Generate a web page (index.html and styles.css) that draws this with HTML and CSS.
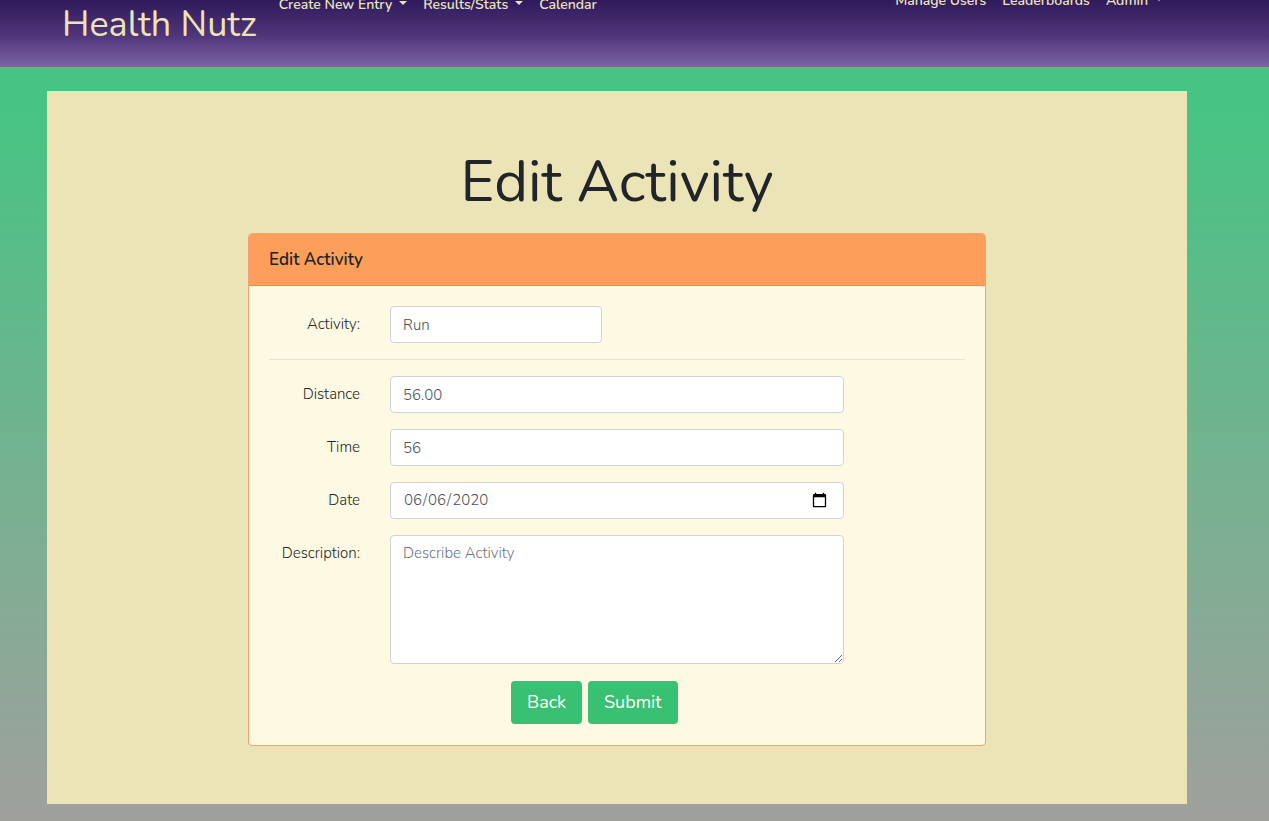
FILE: index.html
```html
<!DOCTYPE html>
<html lang="en">
<head>
<meta charset="utf-8">
<title>Health Nutz - Edit Activity</title>
<link rel="stylesheet" href="styles.css">
</head>
<body>
<header class="navbar">
  <nav class="navbar-inner">
    <a class="brand" href="#">Health Nutz</a>
    <div class="nav-links">
      <a class="nav-link dropdown" href="#">Create New Entry</a>
      <a class="nav-link dropdown" href="#">Results/Stats</a>
      <a class="nav-link" href="#">Calendar</a>
    </div>
    <div class="nav-links account-links">
      <a class="nav-link" href="#">Manage Users</a>
      <a class="nav-link" href="#">Leaderboards</a>
      <a class="nav-link dropdown" href="#">Admin</a>
    </div>
  </nav>
</header>
<main class="page">
  <h1 class="title">Edit Activity</h1>
  <section class="card">
    <h2 class="card-header">Edit Activity</h2>
    <form class="card-body">
      <div class="row">
        <label class="label" for="activity">Activity:</label>
        <input class="control control-short" id="activity" type="text" value="Run">
      </div>
      <hr class="divider">
      <div class="row">
        <label class="label" for="distance">Distance</label>
        <input class="control" id="distance" type="text" value="56.00">
      </div>
      <div class="row">
        <label class="label" for="time">Time</label>
        <input class="control" id="time" type="text" value="56">
      </div>
      <div class="row">
        <label class="label" for="date">Date</label>
        <input class="control" id="date" type="date" value="2020-06-06">
      </div>
      <div class="row">
        <label class="label" for="description">Description:</label>
        <textarea class="control description" id="description" placeholder="Describe Activity"></textarea>
      </div>
      <div class="row">
        <div class="actions">
          <button class="button" type="button">Back</button>
          <button class="button" type="submit">Submit</button>
        </div>
      </div>
    </form>
  </section>
</main>
</body>
</html>
```
FILE: styles.css
```css
* {
  box-sizing: border-box;
}

html {
  min-height: 100%;
  background: linear-gradient(#46c483 0, #46c483 100px, #a0a09d 100%);
}

body {
  margin: 0;
  font-family: Nunito, Lato, sans-serif;
  font-size: 15px;
  font-weight: 300;
  line-height: 23px;
  color: #212529;
}

.navbar {
  margin-top: -40px;
  padding: 0 35px 0 0;
  background: linear-gradient(#2f1a5b 0, #2f1a5b 40px, #50357a 76px, #7c65a6 100%);
}

.navbar-inner {
  display: flex;
  align-items: flex-start;
  max-width: 1140px;
  margin: 0 auto;
  padding: 33px 16px 14px 15px;
}

.brand {
  margin: 4px 22px 0 0;
  font-size: 36px;
  font-weight: 400;
  line-height: 56px;
  color: #ece4b7;
  text-decoration: none;
  white-space: nowrap;
}

.nav-links {
  display: flex;
  gap: 16px;
}

.account-links {
  margin-left: auto;
  margin-top: -4px;
  padding-right: 8px;
}

.nav-link {
  font-size: 14px;
  font-weight: 600;
  color: #ece4b7;
  text-decoration: none;
  white-space: nowrap;
}

.dropdown::after {
  content: "";
  display: inline-block;
  margin-left: 7px;
  vertical-align: 4px;
  border-top: 4px solid;
  border-left: 4px solid transparent;
  border-right: 4px solid transparent;
}

.page {
  width: calc(100% - 129px);
  max-width: 1140px;
  margin: 24px 82px 17px 47px;
  padding: 56px 16px 58px;
  background: #ebe4b6;
}

.title {
  margin: 0 0 16px;
  font-size: 58px;
  font-weight: 400;
  line-height: 70px;
  text-align: center;
}

.card {
  width: 66.6%;
  margin: 0 auto;
  border: 1px solid #f0a273;
  border-radius: 4px;
  background: #fef9e3;
}

.card-header {
  margin: 0;
  padding: 14px 20px;
  border-bottom: 1px solid #e68d4b;
  border-radius: 3px 3px 0 0;
  background: #fd9f5b;
  font-size: 17px;
  font-weight: 600;
}

.card-body {
  display: flex;
  flex-direction: column;
  gap: 16px;
  padding: 20px;
}

.row {
  display: grid;
  grid-template-columns: repeat(12, 1fr);
  column-gap: 30px;
}

.label {
  grid-column: 1 / span 2;
  padding-top: 7px;
  justify-self: end;
}

.control {
  grid-column: 3 / span 8;
  width: 100%;
  height: 37px;
  padding: 6px 12px;
  border: 1px solid #ced4da;
  border-radius: 4px;
  background: #fff;
  font: inherit;
  color: #495057;
}

.control::placeholder {
  color: #6c757d;
}

.control::-webkit-calendar-picker-indicator {
  width: 17px;
  height: 17px;
  padding: 3px;
}

.control-short {
  grid-column: 3 / span 4;
}

.description {
  height: 129px;
  resize: vertical;
}

.divider {
  width: 100%;
  margin: 0;
  border: 0;
  border-top: 1px solid #e7e2cf;
}

.actions {
  grid-column: 5 / -1;
  display: flex;
  gap: 6px;
  padding: 1px 0;
}

.button {
  padding: 8px 16px;
  border: 0;
  border-radius: 4px;
  background: #38c172;
  color: #fff;
  font: inherit;
  font-size: 18px;
  font-weight: 400;
  line-height: 27px;
}
```
